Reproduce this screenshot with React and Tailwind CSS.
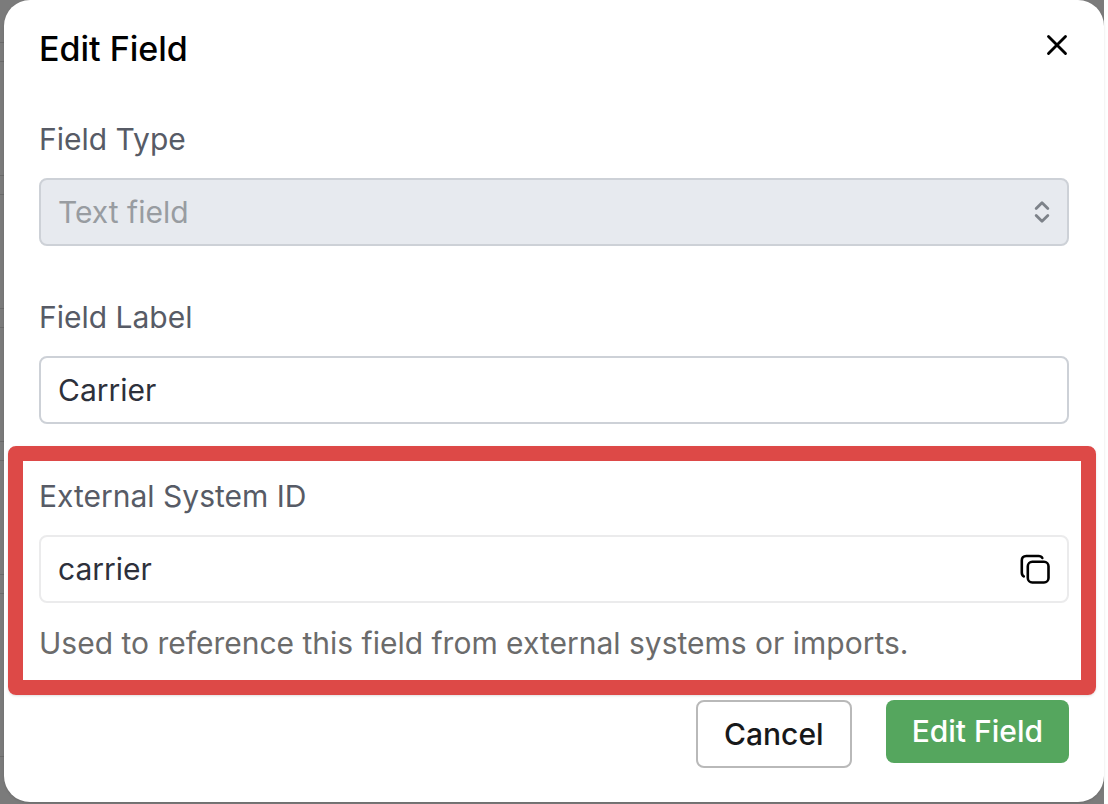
import { X, ChevronsUpDown } from "lucide-react";

function CopyIcon() {
  return (
    <svg className="size-8" viewBox="0 0 32 32" fill="none" stroke="currentColor" strokeWidth="2.6" strokeLinecap="round" strokeLinejoin="round" aria-hidden="true">
      <rect x="8.8" y="8.8" width="20.700" height="20.700" rx="4.500" />
      <path d="M4.800 23.300Q2.800 22.300 2.800 19.500V7.500Q2.800 3 7.300 3H19.500Q22.300 3 23.300 5" />
    </svg>
  );
}

// Rows of the dimmed table that stay visible beside the dialog
function BackdropRows() {
  return (
    <div className="w-1 pt-6" aria-hidden="true">
      {[0, 1, 2, 3, 4].map((row) => (
        <div key={row} className="h-[133px] pt-[18px]">
          <div className="h-5 border-y border-[#6b6b6b]" />
        </div>
      ))}
      <div className="h-[68px] border-b border-[#6b6b6b]" />
    </div>
  );
}

export default function App() {
  return (
    <main className="flex min-h-screen border-r-4 border-white bg-[#7b7b7b] pb-0.5 font-['Inter',sans-serif]">
      <BackdropRows />
      <section role="dialog" aria-labelledby="title" className="min-w-0 flex-1 self-start rounded-[26px] bg-white pb-[34px] shadow-sm">
        <header className="flex items-center justify-between pt-[25px] pr-[30px] pl-[35px]">
          <h1 id="title" className="text-[34px] leading-12 font-medium text-black">Edit Field</h1>
          <button type="button" aria-label="Close" className="-mt-2 text-black">
            <X className="size-[34px]" strokeWidth={2} />
          </button>
        </header>

        <form>
          <div className="px-[35px] pt-11">
            <label htmlFor="type" className="block text-[30px] leading-11 text-[#575b66]">Field Type</label>
            <div className="mt-[17px] grid items-center">
              <select id="type" disabled className="col-start-1 row-start-1 h-[68px] w-full appearance-none rounded-lg border-2 border-[#cdd1d7] bg-[#e7eaef] px-[17px] text-[30px] text-[#989ca1] opacity-100">
                <option>Text field</option>
              </select>
              <ChevronsUpDown className="pointer-events-none col-start-1 row-start-1 mr-[13px] size-7 justify-self-end text-[#7d8289]" strokeWidth={2.4} />
            </div>
          </div>

          <div className="px-[35px] pt-[49px]">
            <label htmlFor="label" className="block text-[30px] leading-11 text-[#575b66]">Field Label</label>
            <input id="label" defaultValue="Carrier" className="mt-[17px] block h-[68px] w-full rounded-lg border-2 border-[#cdd1d7] bg-white px-[17px] text-[30px] text-[#2d303b]" />
          </div>

          <div className="mt-[22px] mr-2 ml-1 rounded-lg border-[15px] border-[#dd4947] pt-[13px] pr-3 pb-[15px] pl-4 shadow-sm">
            <label htmlFor="external" className="block text-[30px] leading-11 text-[#575b66]">External System ID</label>
            <div className="mt-[17px] flex h-[68px] items-center rounded-lg border-2 border-[#ebebec] pr-4">
              <input id="external" readOnly defaultValue="carrier" aria-describedby="help" className="min-w-0 flex-1 bg-transparent px-[17px] text-[30px] text-[#2d303b]" />
              <button type="button" aria-label="Copy" className="text-black"><CopyIcon /></button>
            </div>
            <p id="help" className="mt-[18px] text-[30px] leading-11 text-[#6b6b6b]">Used to reference this field from external systems or imports.</p>
          </div>

          <footer className="flex items-start justify-end gap-[34px] px-[35px] pt-[5px]">
            <button type="button" className="h-[68px] rounded-lg border-2 border-[#b9b9b9] bg-white px-[26px] text-[30px] font-medium text-[#17181a]">Cancel</button>
            <button type="submit" className="h-[63px] rounded-lg bg-[#55a65e] px-[26px] text-[30px] font-medium text-white">Edit Field</button>
          </footer>
        </form>
      </section>
    </main>
  );
}
